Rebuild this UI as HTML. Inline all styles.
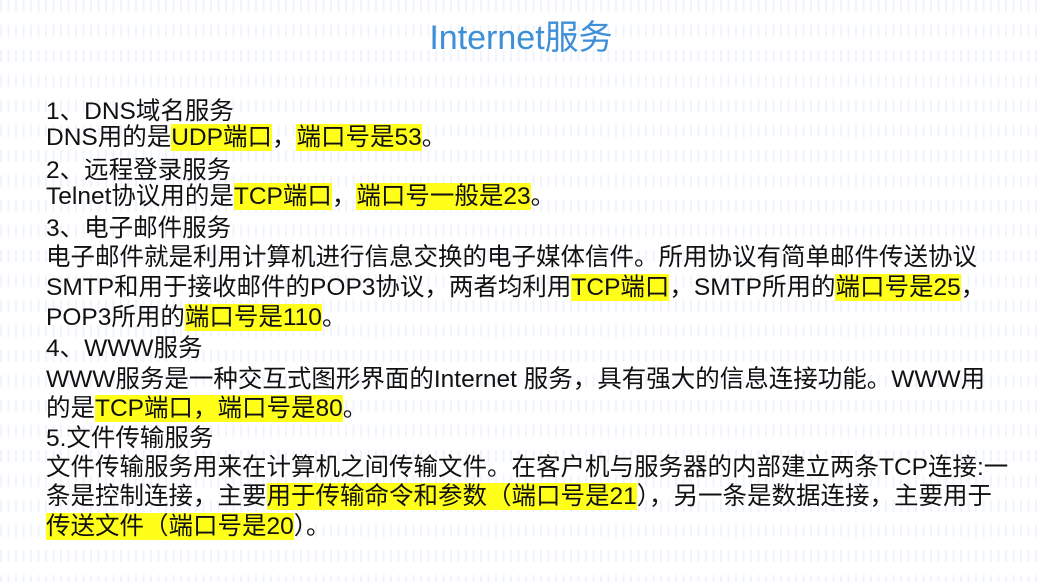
<!DOCTYPE html>
<html><head><meta charset="utf-8"><style>
html,body{margin:0;padding:0}
body{width:1042px;height:582px;overflow:hidden;position:relative;background:#fff;
font-family:"Liberation Sans","Noto Sans CJK SC",sans-serif;color:#111}
.bg{position:absolute;left:0;top:0;width:1042px;height:582px;
background-image:repeating-linear-gradient(90deg,rgba(200,215,240,.28) 0 2px,transparent 2px 7.5px);
-webkit-mask-image:repeating-linear-gradient(180deg,#000 0 12px,transparent 12px 25px);
mask-image:repeating-linear-gradient(180deg,#000 0 12px,transparent 12px 25px);
background-position:0 13px}
.t{position:absolute;left:0;width:1042px;text-align:center;top:16px;font-size:34px;color:#3d8fd8;line-height:44px}
.l{position:absolute;left:46px;font-size:24.5px;line-height:28px;white-space:nowrap}
.h{background:#ffff1a}
</style></head><body>
<div class="bg"></div>
<div class="t">Internet服务</div>
<div class="l" style="top:98px">1、DNS域名服务</div>
<div class="l" style="top:124px">DNS用的是<span class="h">UDP端口</span>，<span class="h">端口号是53</span>。</div>
<div class="l" style="top:157px">2、远程登录服务</div>
<div class="l" style="top:183px">Telnet协议用的是<span class="h">TCP端口</span>，<span class="h">端口号一般是23</span>。</div>
<div class="l" style="top:215px">3、电子邮件服务</div>
<div class="l" style="top:244px">电子邮件就是利用计算机进行信息交换的电子媒体信件。所用协议有简单邮件传送协议</div>
<div class="l" style="top:274px">SMTP和用于接收邮件的POP3协议，两者均利用<span class="h">TCP端口</span>，SMTP所用的<span class="h">端口号是25</span>，</div>
<div class="l" style="top:304px">POP3所用的<span class="h">端口号是110</span>。</div>
<div class="l" style="top:335px">4、WWW服务</div>
<div class="l" style="top:366px">WWW服务是一种交互式图形界面的Internet 服务，具有强大的信息连接功能。WWW用</div>
<div class="l" style="top:395px">的是<span class="h">TCP端口，端口号是80</span>。</div>
<div class="l" style="top:425px">5.文件传输服务</div>
<div class="l" style="top:454px">文件传输服务用来在计算机之间传输文件。在客户机与服务器的内部建立两条TCP连接:一</div>
<div class="l" style="top:483px">条是控制连接，主要<span class="h">用于传输命令和参数（端口号是21</span>），另一条是数据连接，主要用于</div>
<div class="l" style="top:513px"><span class="h">传送文件（端口号是20</span>）。</div>
</body></html>
